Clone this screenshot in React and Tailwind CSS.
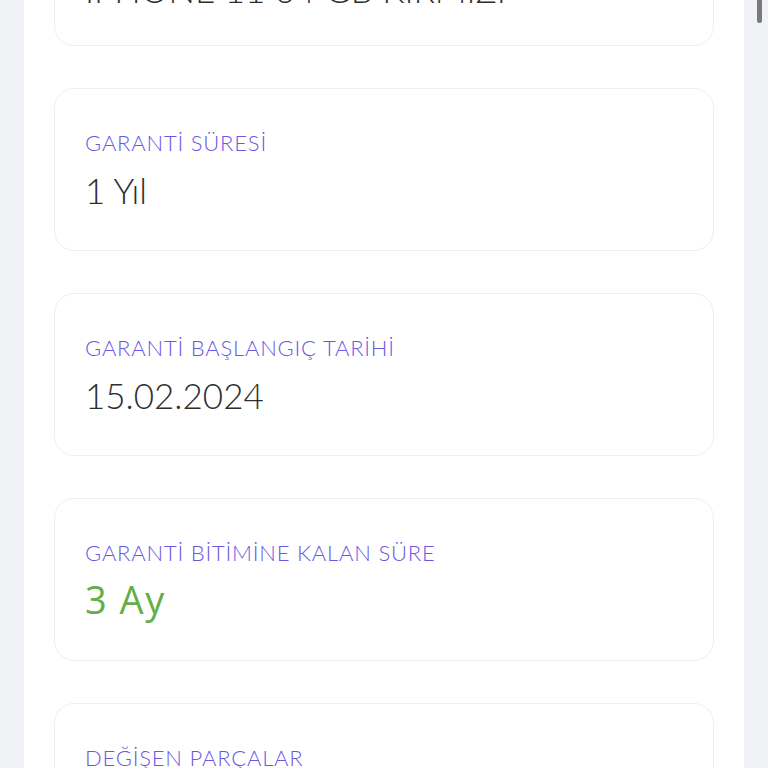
import React from 'react';

const cards = [
  { label: 'ÜRÜN MODELİ', value: 'IPHONE 11 64 GB KIRMIZI', first: true },
  { label: 'GARANTİ SÜRESİ', value: '1 Yıl' },
  { label: 'GARANTİ BAŞLANGIÇ TARİHİ', value: '15.02.2024' },
  { label: 'GARANTİ BİTİMİNE KALAN SÜRE', value: '3 Ay', green: true },
  { label: 'DEĞİŞEN PARÇALAR', value: 'Ekran' },
];

const InfoCard = ({ label, value, green, first }) => (
  <div
    className={
      first
        ? 'h-[163px] shrink-0 rounded-[20px] border border-[#efeff3] bg-white px-[30px] pt-[44px]'
        : 'h-[163px] shrink-0 rounded-[20px] border border-[#efeff3] bg-white px-[30px] pt-[40px]'
    }
  >
    <p className="text-[22px] leading-[28px] tracking-[0.8px] font-light text-[#6a58e4] font-['Lato',sans-serif]">
      {label}
    </p>
    {green ? (
      <p className="mt-[8px] text-[38px] leading-[48px] tracking-[1.5px] font-normal text-[#62ae48] font-['Open_Sans',sans-serif]">
        {value}
      </p>
    ) : (
      <p className="mt-[10px] text-[35px] leading-[46px] font-light text-[#2e2e2e] font-['Lato',sans-serif]">
        {value}
      </p>
    )}
  </div>
);

export default function App() {
  return (
    <div className="flex h-[768px] w-[768px] overflow-hidden bg-[#f1f2f6]">
      <div className="ml-[24px] h-full w-[720px] overflow-hidden bg-white">
        <div className="mt-[-117px] flex flex-col gap-[42px] px-[30px]">
          {cards.map((c) => (
            <InfoCard key={c.label} {...c} />
          ))}
        </div>
      </div>
      <div className="relative h-full w-[24px] bg-[#f1f2f6]">
        <div className="absolute left-[13px] top-0 h-[23px] w-[5px] rounded-b-full bg-[#7a7a7a]" />
      </div>
    </div>
  );
}
